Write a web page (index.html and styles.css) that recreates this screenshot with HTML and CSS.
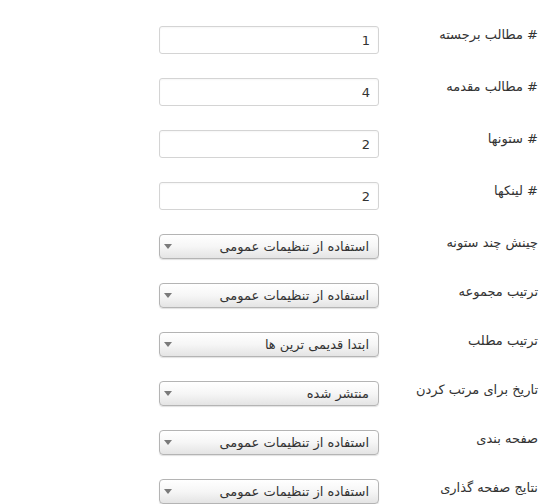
FILE: index.html
```html
<!DOCTYPE html>
<html lang="fa" dir="rtl">
<head>
    <meta charset="UTF-8">
    <meta name="viewport" content="width=device-width, initial-scale=1.0">
    <title>تنظیمات بلاک</title>
    <link rel="stylesheet" href="styles.css">
</head>
<body>

<div class="form">
    <div class="row">
        <label class="label" for="featured"># مطالب برجسته</label>
        <div class="field"><input class="text" type="text" id="featured" value="1"></div>
    </div>
    <div class="row">
        <label class="label" for="intro"># مطالب مقدمه</label>
        <div class="field"><input class="text" type="text" id="intro" value="4"></div>
    </div>
    <div class="row">
        <label class="label" for="columns"># ستونها</label>
        <div class="field"><input class="text" type="text" id="columns" value="2"></div>
    </div>
    <div class="row">
        <label class="label" for="links"># لینکها</label>
        <div class="field"><input class="text" type="text" id="links" value="2"></div>
    </div>

    <div class="row">
        <label class="label" for="multi">چینش چند ستونه</label>
        <div class="field drop">
            <select id="multi"><option>استفاده از تنظیمات عمومی</option></select>
        </div>
    </div>
    <div class="row">
        <label class="label" for="order">ترتیب مجموعه</label>
        <div class="field drop">
            <select id="order"><option>استفاده از تنظیمات عمومی</option></select>
        </div>
    </div>
    <div class="row">
        <label class="label" for="articleOrder">ترتیب مطلب</label>
        <div class="field drop">
            <select id="articleOrder"><option>ابتدا قدیمی ترین ها</option></select>
        </div>
    </div>
    <div class="row">
        <label class="label" for="dateSort">تاریخ برای مرتب کردن</label>
        <div class="field drop">
            <select id="dateSort"><option>منتشر شده</option></select>
        </div>
    </div>
    <div class="row">
        <label class="label" for="paging">صفحه بندی</label>
        <div class="field drop">
            <select id="paging"><option>استفاده از تنظیمات عمومی</option></select>
        </div>
    </div>
    <div class="row">
        <label class="label" for="pagingResults">نتایج صفحه گذاری</label>
        <div class="field drop">
            <select id="pagingResults"><option>استفاده از تنظیمات عمومی</option></select>
        </div>
    </div>
</div>

</body>
</html>
```

FILE: styles.css
```css
body {
    margin: 0;
    background: #fff;
    color: #333;
    font-family: "DejaVu Sans", Tahoma, sans-serif;
    font-size: 13px;
}
.form {
    padding: 14px 11px 0 0;
}
.row {
    display: flex;
    padding: 12px 0;
}
.label {
    width: 159px;
    flex: none;
    padding-top: 0;
    line-height: 18px;
    color: #333;
}
.field {
    width: 220px;
    flex: none;
}
.text {
    box-sizing: border-box;
    width: 220px;
    height: 28px;
    margin: 0;
    padding: 0 8px;
    border: 1px solid #d4d4d4;
    border-radius: 3px;
    box-shadow: inset 0 1px 2px rgba(0, 0, 0, 0.04);
    font-family: inherit;
    font-size: 13px;
    color: #333;
    text-align: right;
}
.drop {
    position: relative;
}
.drop select {
    -webkit-appearance: none;
    appearance: none;
    box-sizing: border-box;
    width: 220px;
    height: 25px;
    margin: 0;
    padding: 0 9px 0 20px;
    border: 1px solid #b4b4b4;
    border-radius: 4px;
    background: linear-gradient(#ffffff, #f6f6f6 50%, #e4e4e4);
    box-shadow: 0 1px 1px rgba(0, 0, 0, 0.12);
    font-family: inherit;
    font-size: 13px;
    color: #333;
}
.drop::after {
    content: "";
    position: absolute;
    left: 5px;
    top: 10px;
    border-left: 4px solid transparent;
    border-right: 4px solid transparent;
    border-top: 5px solid #7a7a7a;
    pointer-events: none;
}
```
